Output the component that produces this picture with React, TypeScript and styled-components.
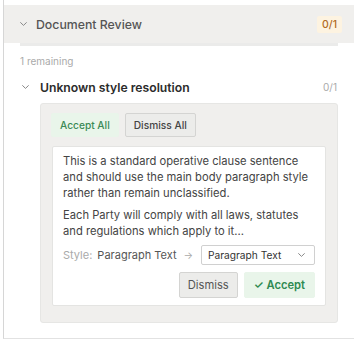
import React from "react";
import styled, { createGlobalStyle } from "styled-components";

const GlobalStyle = createGlobalStyle`
  html, body {
    margin: 0;
    padding: 0;
    background: #ffffff;
  }
  body {
    font-family: Inter, "Noto Sans", "Liberation Sans", sans-serif;
    -webkit-font-smoothing: antialiased;
  }
`;

const Panel = styled.div`
  margin-left: 3px;
  padding-top: 5px;
  height: 333px;
  border-left: 1px solid #d6d6d6;
  border-bottom: 1px solid #e2e2e2;
  display: flex;
  flex-direction: column;
`;

const PanelHeader = styled.div`
  height: 38px;
  background: #f0efed;
  display: flex;
  align-items: center;
  padding: 0 12px 0 16px;
`;

const Chevron = styled.svg`
  width: 7px;
  height: 4px;
  flex: none;
  color: #888;
`;

const PanelTitle = styled.div`
  margin-left: 9px;
  font-size: 12.3px;
  font-weight: 500;
  color: #555;
  flex: 1;
`;

const Badge = styled.span`
  background: #fdf3e1;
  color: #b06a24;
  font-size: 10.5px;
  font-weight: 500;
  padding: 0 5px;
  height: 17px;
  line-height: 17px;
  border-radius: 2px;
`;

const ProgressTrack = styled.div`
  height: 3px;
  margin: 0 16px;
  background: #ebebea;
`;

const Remaining = styled.div`
  font-size: 10px;
  color: #aaa;
  margin: 9px 0 0 16px;
  line-height: 12px;
`;

const Body = styled.div`
  padding: 0 16px;
`;

const SectionRow = styled.div`
  display: flex;
  align-items: center;
  height: 26px;
  margin-top: 7px;
  padding-left: 2px;
`;

const SectionTitle = styled.div`
  margin-left: 11px;
  flex: 1;
  font-size: 12.2px;
  font-weight: 600;
  color: #2b2b2b;
`;

const Count = styled.span`
  font-size: 10px;
  color: #aaa;
  margin-right: 1px;
`;

const GroupBox = styled.div`
  margin: 3px 0 0 20px;
  background: #f0efed;
  border: 1px solid #e6e6e4;
  border-radius: 3px;
  padding: 9px 11px 16px 10px;
`;

const BulkBar = styled.div`
  display: flex;
  gap: 6px;
`;

const Button = styled.button<{ $variant: "accept" | "plain" }>`
  font-family: inherit;
  height: 24px;
  padding: 0 8px;
  font-size: 10.2px;
  font-weight: 500;
  border-radius: 2px;
  cursor: pointer;
  display: inline-flex;
  align-items: center;
  gap: 5px;
  border: 1px solid ${(p) => (p.$variant === "accept" ? "#e9f5ea" : "#d4d4d2")};
  background: ${(p) => (p.$variant === "accept" ? "#e9f5ea" : "#ececea")};
  color: ${(p) => (p.$variant === "accept" ? "#3b8a56" : "#444")};
`;

const ActionButton = styled(Button)`
  height: 26px;
  font-size: 11.2px;
  padding: 0 ${(p) => (p.$variant === "accept" ? "9px" : "8px")};
  font-weight: ${(p) => (p.$variant === "accept" ? 600 : 400)};
  color: ${(p) => (p.$variant === "accept" ? "#2f8a52" : "#555")};
`;

const Card = styled.div`
  margin-top: 9px;
  margin-left: 1px;
  background: #fff;
  border: 1px solid #e4e4e2;
  border-radius: 2px;
  padding: 6px 10px 7px 10px;
`;

const Para = styled.p`
  margin: 0;
  font-size: 11.2px;
  line-height: 16px;
  color: #444;
  & + & {
    margin-top: 6px;
  }
`;

const StyleRow = styled.div`
  display: flex;
  align-items: center;
  margin-top: 6px;
  font-size: 11px;
  white-space: nowrap;
`;

const StyleLabel = styled.span`
  color: #aaa;
`;

const StyleValue = styled.span`
  color: #555;
  margin-left: 5px;
`;

const Arrow = styled.span`
  color: #aaa;
  margin: 0 7px 0 7px;
  font-size: 10px;
`;

const Select = styled.div`
  flex: 0 1 114px;
  min-width: 0;
  height: 20px;
  box-sizing: border-box;
  border: 1px solid #d0d0d0;
  border-radius: 2px;
  display: flex;
  align-items: center;
  justify-content: space-between;
  padding: 0 9px 0 6px;
  font-size: 10.2px;
  color: #333;
  background: #fff;
  margin-left: auto;
`;

const Actions = styled.div`
  display: flex;
  justify-content: flex-end;
  gap: 6px;
  margin-top: 7px;
`;

const ChevronDown = () => (
  <Chevron viewBox="0 0 7 4" fill="none">
    <path d="M0.6 0.6 L3.5 3.4 L6.4 0.6" stroke="currentColor" strokeWidth="1" strokeLinecap="round" strokeLinejoin="round" />
  </Chevron>
);

export default function App() {
  return (
    <>
      <GlobalStyle />
      <Panel>
        <PanelHeader>
          <ChevronDown />
          <PanelTitle>Document Review</PanelTitle>
          <Badge>0/1</Badge>
        </PanelHeader>
        <ProgressTrack />
        <Remaining>1 remaining</Remaining>
        <Body>
          <SectionRow>
            <ChevronDown />
            <SectionTitle>Unknown style resolution</SectionTitle>
            <Count>0/1</Count>
          </SectionRow>
          <GroupBox>
            <BulkBar>
              <Button $variant="accept">Accept All</Button>
              <Button $variant="plain">Dismiss All</Button>
            </BulkBar>
            <Card>
              <Para>
                This is a standard operative clause sentence and should use the main body paragraph style
                rather than remain unclassified.
              </Para>
              <Para>Each Party will comply with all laws, statutes and regulations which apply to it...</Para>
              <StyleRow>
                <StyleLabel>Style:</StyleLabel>
                <StyleValue>Paragraph Text</StyleValue>
                <Arrow>→</Arrow>
                <Select>
                  Paragraph Text
                  <ChevronDown />
                </Select>
              </StyleRow>
              <Actions>
                <ActionButton $variant="plain">Dismiss</ActionButton>
                <ActionButton $variant="accept">✓ Accept</ActionButton>
              </Actions>
            </Card>
          </GroupBox>
        </Body>
      </Panel>
    </>
  );
}
